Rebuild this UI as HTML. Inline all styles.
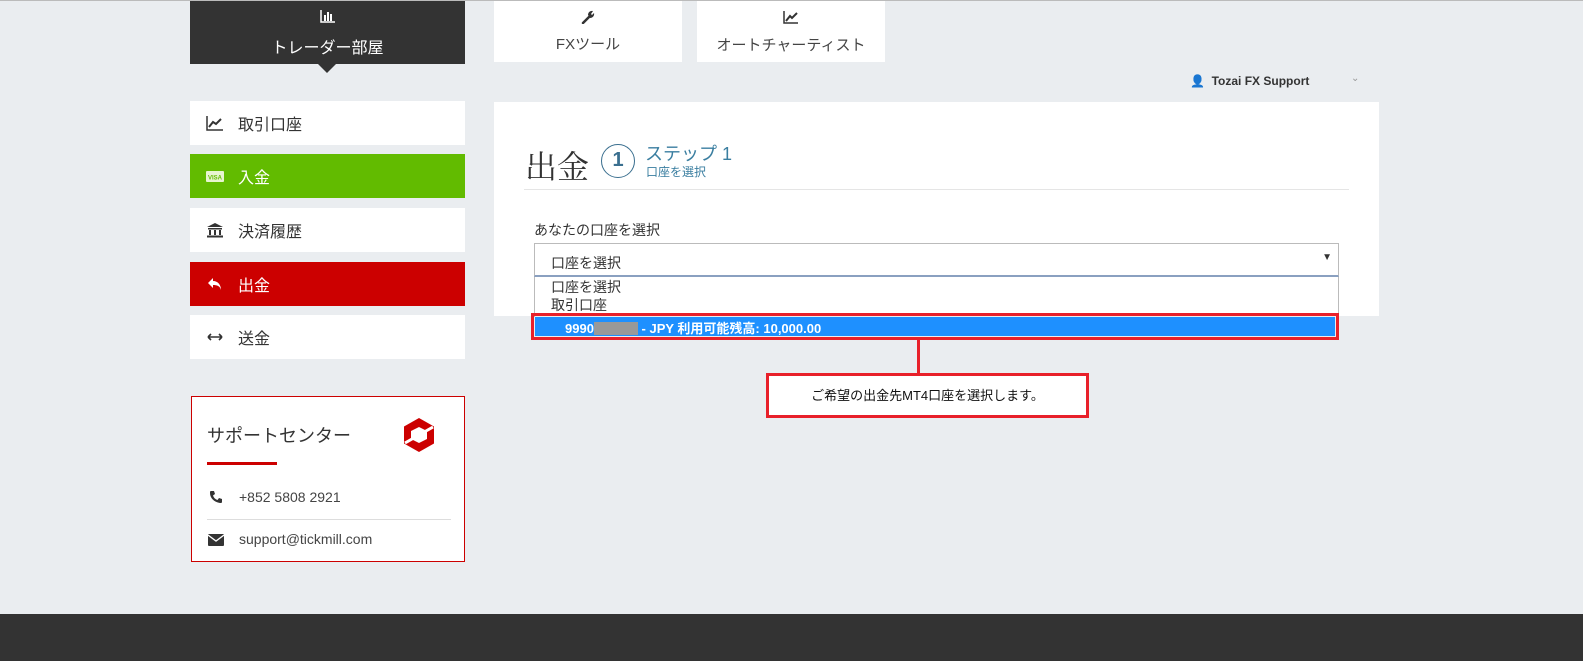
<!DOCTYPE html>
<html><head><meta charset="utf-8"><style>
*{box-sizing:border-box;margin:0;padding:0}
body{width:1583px;height:661px;background:#eaedf0;font-family:"Liberation Sans","Noto Sans CJK JP",sans-serif;position:relative;overflow:hidden;color:#333}
.abs{position:absolute}
.topline{left:0;top:0;width:1583px;height:1px;background:#bbb}
.tab{background:#fff;text-align:center;font-size:15px;color:#444}
.nav{left:190px;width:275px;height:44px;background:#fff;font-size:16px;color:#333;display:flex;align-items:center;padding-left:16px}
.nav svg{margin-right:14px;width:18px;height:16px}
.footer{left:0;top:614px;width:1583px;height:47px;background:#333}
</style></head><body>
<div class="abs topline"></div>
<div class="abs" style="left:190px;top:1px;width:275px;height:63px;background:#333;color:#fff;text-align:center;font-size:16px">
<svg width="16" height="14" viewBox="0 0 16 14" style="margin-top:8px"><path d="M1 1V13H15" stroke="#fff" stroke-width="1.5" fill="none"/><rect x="4" y="6" width="2" height="6" fill="#fff"/><rect x="7" y="3" width="2" height="9" fill="#fff"/><rect x="10" y="5" width="2" height="7" fill="#fff"/></svg>
<div style="margin-top:6px">トレーダー部屋</div></div>
<div class="abs" style="left:318px;top:64px;width:0;height:0;border-left:9px solid transparent;border-right:9px solid transparent;border-top:9px solid #333"></div>
<div class="abs tab" style="left:494px;top:1px;width:188px;height:61px">
<svg width="14" height="14" viewBox="0 0 14 14" style="margin-top:9px"><path d="M2 13L8 7" stroke="#333" stroke-width="2.5" stroke-linecap="round"/><path d="M7 5A4 4 0 0 1 12 1L10 4L11 5L13 3A4 4 0 0 1 9 8Z" fill="#333"/></svg>
<div style="margin-top:5px">FXツール</div></div>
<div class="abs tab" style="left:697px;top:1px;width:188px;height:61px">
<svg width="16" height="14" viewBox="0 0 16 14" style="margin-top:9px"><path d="M1 1V13H15" stroke="#333" stroke-width="1.5" fill="none"/><path d="M3 11L7 6L9 8L14 3" stroke="#333" stroke-width="2" fill="none"/></svg>
<div style="margin-top:6px">オートチャーティスト</div></div>
<div class="abs" style="left:1190px;top:74px;font-size:12px;font-weight:bold;color:#333">&#128100;&nbsp; Tozai FX Support</div>
<div class="abs" style="left:1351px;top:73px;font-size:10px;color:#999">&#8964;</div>

<div class="abs nav" style="top:101px"><svg viewBox="0 0 18 16"><path d="M1 1V15H17" stroke="#333" stroke-width="1.5" fill="none"/><path d="M3 12L7 7L10 9L15 4" stroke="#333" stroke-width="2" fill="none"/></svg>取引口座</div>
<div class="abs nav" style="top:154px;background:#62bb00;color:#fff"><svg viewBox="0 0 18 16"><rect x="0" y="3" width="18" height="11" rx="1" fill="#e8f5d0"/><text x="9" y="11.5" font-size="6" text-anchor="middle" fill="#62bb00" font-weight="bold">VISA</text></svg>入金</div>
<div class="abs nav" style="top:208px"><svg viewBox="0 0 18 16"><path d="M9 1L1 5H17Z" fill="#333"/><rect x="2" y="6" width="14" height="1.5" fill="#333"/><rect x="3" y="8" width="2" height="5" fill="#333"/><rect x="8" y="8" width="2" height="5" fill="#333"/><rect x="13" y="8" width="2" height="5" fill="#333"/><rect x="1" y="13.5" width="16" height="2" fill="#333"/></svg>決済履歴</div>
<div class="abs nav" style="top:262px;background:#cc0000;color:#fff"><svg viewBox="0 0 18 16"><path d="M7 2L2 7L7 12V9C11 9 14 10 15 14C15 9 12 5 7 5Z" fill="#fff"/></svg>出金</div>
<div class="abs nav" style="top:315px"><svg viewBox="0 0 18 16"><path d="M2 8H16M2 8L5 5M2 8L5 11M16 8L13 5M16 8L13 11" stroke="#333" stroke-width="1.6" fill="none"/></svg>送金</div>

<div class="abs" style="left:191px;top:396px;width:274px;height:166px;background:#fff;border:1px solid #cc0000">
<div class="abs" style="left:15px;top:25px;font-size:18px;color:#333">サポートセンター</div>
<svg class="abs" style="left:210px;top:20px" width="34" height="36" viewBox="0 0 34 36"><path d="M17 1L32 9.5V26.5L17 35L2 26.5V9.5Z" fill="#cc0000"/><path d="M9 14L17 10L25 14V22L17 26L9 22Z" fill="#fff"/><path d="M3 26L31 10" stroke="#fff" stroke-width="3"/></svg>
<div class="abs" style="left:15px;top:65px;width:70px;height:3px;background:#cc0000"></div>
<svg class="abs" style="left:17px;top:93px" width="14" height="14" viewBox="0 0 14 14"><path d="M2 1L5 1L6 4L4 5.5C5 8 6 9 8.5 10L10 8L13 9V12C13 13 12 13 11 13C5 12 1 8 1 3C1 2 1 1 2 1Z" fill="#333"/></svg>
<div class="abs" style="left:47px;top:92px;font-size:14px;color:#444">+852 5808 2921</div>
<div class="abs" style="left:15px;top:122px;width:244px;height:1px;background:#ddd"></div>
<svg class="abs" style="left:16px;top:137px" width="16" height="12" viewBox="0 0 16 12"><rect width="16" height="12" rx="1" fill="#333"/><path d="M0 1L8 7L16 1" stroke="#fff" stroke-width="1.3" fill="none"/></svg>
<div class="abs" style="left:47px;top:134px;font-size:14px;color:#444">support@tickmill.com</div>
</div>

<div class="abs" style="left:494px;top:102px;width:885px;height:214px;background:#fff">
<div class="abs" style="left:31px;top:40px;font-size:32px;font-family:'Liberation Serif','Noto Serif CJK SC',serif;color:#333">出金</div>
<div class="abs" style="left:107px;top:42px;width:34px;height:34px;border:1.5px solid #3a6f8f;border-radius:50%;text-align:center;line-height:31px;font-size:20px;font-weight:bold;color:#3a6f8f">1</div>
<div class="abs" style="left:151px;top:38px;font-size:18px;color:#3a7ea0">ステップ 1</div>
<div class="abs" style="left:152px;top:61px;font-size:12px;color:#3a7ea0">口座を選択</div>
<div class="abs" style="left:30px;top:87px;width:825px;height:1px;background:#e5e5e5"></div>
<div class="abs" style="left:40px;top:118px;font-size:14px;color:#333">あなたの口座を選択</div>
<div class="abs" style="left:40px;top:141px;width:805px;height:34px;border:1px solid #bbb;border-bottom:2px solid #8aa0c0;font-size:14px;padding:9px 0 0 16px">口座を選択<span style="position:absolute;right:6px;top:8px;font-size:10px">&#9660;</span></div>
<div class="abs" style="left:40px;top:175px;width:805px;height:40px;border-left:1px solid #bbb;border-right:1px solid #bbb;font-size:14px;padding-left:16px;line-height:18px;padding-top:1px">口座を選択<br>取引口座</div>
</div>

<div class="abs" style="left:531px;top:313px;width:808px;height:27px;border:3px solid #e8202a"></div>
<div class="abs" style="left:535px;top:317px;width:800px;height:19px;background:#1e90ff;color:#fff;font-size:13px;font-weight:bold;padding:1px 0 0 30px">9990<span style="display:inline-block;width:44px;height:13px;background:#999;vertical-align:-2px"></span> - JPY 利用可能残高: 10,000.00</div>
<div class="abs" style="left:917px;top:340px;width:3px;height:34px;background:#e8202a"></div>
<div class="abs" style="left:766px;top:373px;width:323px;height:45px;border:3px solid #e8202a;background:#fff;font-size:13px;text-align:center;line-height:39px;color:#111">ご希望の出金先MT4口座を選択します。</div>

<div class="abs footer"></div>
</body></html>
